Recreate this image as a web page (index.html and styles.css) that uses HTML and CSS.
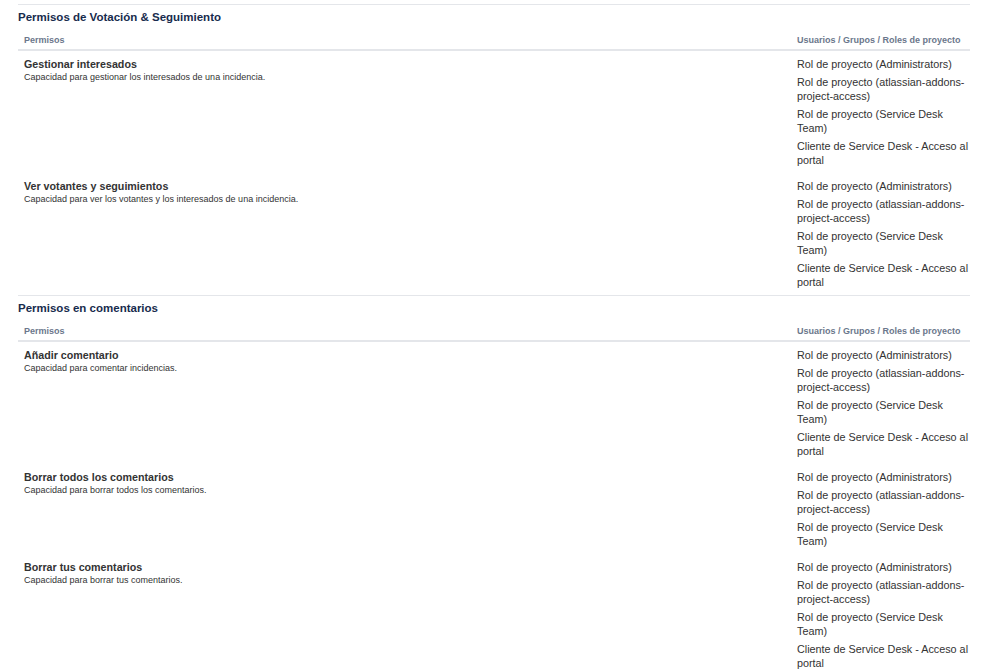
FILE: index.html
```html
<!DOCTYPE html>
<html lang="es">
<head>
  <meta charset="UTF-8">
  <title>Permisos</title>
  <link rel="stylesheet" href="styles.css">
</head>
<body>
  <div class="page">
    <!-- Votación & seguimiento -->
    <section class="perm-section">
      <h2>Permisos de Votación &amp; Seguimiento</h2>
      <table class="perm-table">
        <thead>
          <tr>
            <th>Permisos</th>
            <th class="col-users">Usuarios / Grupos / Roles de proyecto</th>
          </tr>
        </thead>
        <tbody>
          <tr>
            <td>
              <b class="perm-name">Gestionar interesados</b>
              <span class="perm-desc">Capacidad para gestionar los interesados de una incidencia.</span>
            </td>
            <td class="col-users">
              <ul>
                <li>Rol de proyecto (Administrators)</li>
                <li>Rol de proyecto (atlassian-addons-project-access)</li>
                <li>Rol de proyecto (Service Desk Team)</li>
                <li>Cliente de Service Desk - Acceso al portal</li>
              </ul>
            </td>
          </tr>
          <tr>
            <td>
              <b class="perm-name">Ver votantes y seguimientos</b>
              <span class="perm-desc">Capacidad para ver los votantes y los interesados de una incidencia.</span>
            </td>
            <td class="col-users">
              <ul>
                <li>Rol de proyecto (Administrators)</li>
                <li>Rol de proyecto (atlassian-addons-project-access)</li>
                <li>Rol de proyecto (Service Desk Team)</li>
                <li>Cliente de Service Desk - Acceso al portal</li>
              </ul>
            </td>
          </tr>
        </tbody>
      </table>
    </section>

    <!-- Comentarios -->
    <section class="perm-section">
      <h2>Permisos en comentarios</h2>
      <table class="perm-table">
        <thead>
          <tr>
            <th>Permisos</th>
            <th class="col-users">Usuarios / Grupos / Roles de proyecto</th>
          </tr>
        </thead>
        <tbody>
          <tr>
            <td>
              <b class="perm-name">Añadir comentario</b>
              <span class="perm-desc">Capacidad para comentar incidencias.</span>
            </td>
            <td class="col-users">
              <ul>
                <li>Rol de proyecto (Administrators)</li>
                <li>Rol de proyecto (atlassian-addons-project-access)</li>
                <li>Rol de proyecto (Service Desk Team)</li>
                <li>Cliente de Service Desk - Acceso al portal</li>
              </ul>
            </td>
          </tr>
          <tr>
            <td>
              <b class="perm-name">Borrar todos los comentarios</b>
              <span class="perm-desc">Capacidad para borrar todos los comentarios.</span>
            </td>
            <td class="col-users">
              <ul>
                <li>Rol de proyecto (Administrators)</li>
                <li>Rol de proyecto (atlassian-addons-project-access)</li>
                <li>Rol de proyecto (Service Desk Team)</li>
              </ul>
            </td>
          </tr>
          <tr>
            <td>
              <b class="perm-name">Borrar tus comentarios</b>
              <span class="perm-desc">Capacidad para borrar tus comentarios.</span>
            </td>
            <td class="col-users">
              <ul>
                <li>Rol de proyecto (Administrators)</li>
                <li>Rol de proyecto (atlassian-addons-project-access)</li>
                <li>Rol de proyecto (Service Desk Team)</li>
                <li>Cliente de Service Desk - Acceso al portal</li>
              </ul>
            </td>
          </tr>
        </tbody>
      </table>
    </section>
  </div>
</body>
</html>
```

FILE: styles.css
```css
* {
  margin: 0;
  padding: 0;
  box-sizing: border-box;
}

body {
  font-family: "Liberation Sans", Arial, sans-serif;
  color: #333;
  background: #fff;
}

.page {
  padding: 4px 29px 0 18px;
}

/* Bloque de permisos */
.perm-section {
  border-top: 1px solid #e4e6ea;
}

.perm-section h2 {
  font-size: 11.5px;
  line-height: 16px;
  font-weight: bold;
  color: #172b4d;
  margin-top: 4px;
}

.perm-table {
  width: 100%;
  border-collapse: collapse;
  table-layout: fixed;
}

.perm-table th {
  text-align: left;
  font-size: 9px;
  line-height: 12px;
  font-weight: bold;
  color: #6b778c;
  padding: 9px 6px 3px;
  border-bottom: 2px solid #e4e6ea;
}

.perm-table td {
  vertical-align: top;
  padding: 6px 6px;
}

.perm-table .col-users {
  width: 179px;
  padding-right: 0;
}

.perm-name {
  display: block;
  font-size: 10.7px;
  line-height: 14px;
  color: #333;
}

.perm-desc {
  display: block;
  font-size: 9px;
  line-height: 12px;
  color: #333;
}

.col-users ul {
  list-style: none;
  display: flex;
  flex-direction: column;
  gap: 4px;
}

.col-users li {
  font-size: 10.8px;
  line-height: 14px;
  color: #333;
}
```
